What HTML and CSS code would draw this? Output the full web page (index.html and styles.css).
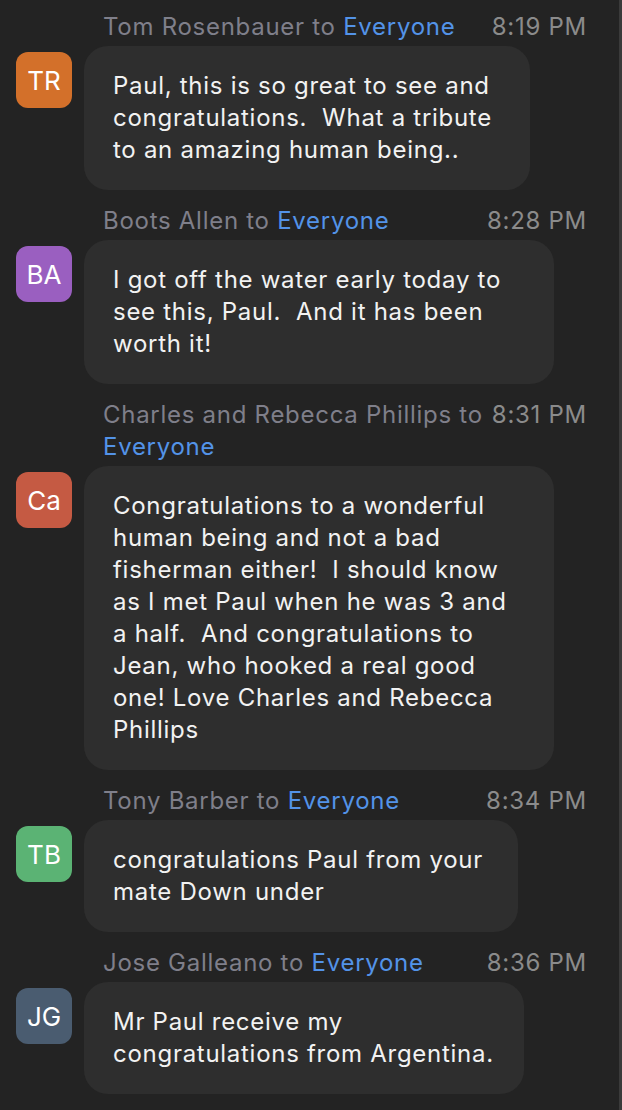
FILE: index.html
```html
<!DOCTYPE html>
<html lang="en">
<head>
<meta charset="utf-8">
<title>Chat</title>
<link rel="stylesheet" href="styles.css">
</head>
<body>
<main class="chat">
  <section class="msg">
    <div class="meta">
      <div class="who">Tom Rosenbauer to <span class="to">Everyone</span></div>
      <div class="time">8:19 PM</div>
    </div>
    <div class="row">
      <div class="avatar av-orange">TR</div>
      <div class="bubble" style="width:446px">Paul, this is so great to see and<br>congratulations.&nbsp; What a tribute<br>to an amazing human being..</div>
    </div>
  </section>

  <section class="msg">
    <div class="meta">
      <div class="who">Boots Allen to <span class="to">Everyone</span></div>
      <div class="time">8:28 PM</div>
    </div>
    <div class="row">
      <div class="avatar av-purple">BA</div>
      <div class="bubble" style="width:470px">I got off the water early today to<br>see this, Paul.&nbsp; And it has been<br>worth it!</div>
    </div>
  </section>

  <section class="msg">
    <div class="meta">
      <div class="who">Charles and Rebecca Phillips to<br><span class="to">Everyone</span></div>
      <div class="time">8:31 PM</div>
    </div>
    <div class="row">
      <div class="avatar av-red">Ca</div>
      <div class="bubble" style="width:470px">Congratulations to a wonderful<br>human being and not a bad<br>fisherman either!&nbsp; I should know<br>as I met Paul when he was 3 and<br>a half.&nbsp; And congratulations to<br>Jean, who hooked a real good<br>one! Love Charles and Rebecca<br>Phillips</div>
    </div>
  </section>

  <section class="msg">
    <div class="meta">
      <div class="who">Tony Barber to <span class="to">Everyone</span></div>
      <div class="time">8:34 PM</div>
    </div>
    <div class="row">
      <div class="avatar av-green">TB</div>
      <div class="bubble" style="width:434px">congratulations Paul from your<br>mate Down under</div>
    </div>
  </section>

  <section class="msg">
    <div class="meta">
      <div class="who">Jose Galleano to <span class="to">Everyone</span></div>
      <div class="time">8:36 PM</div>
    </div>
    <div class="row">
      <div class="avatar av-slate">JG</div>
      <div class="bubble" style="width:440px">Mr Paul receive my<br>congratulations from Argentina.</div>
    </div>
  </section>
</main>
</body>
</html>
```

FILE: styles.css
```css
html, body {
  margin: 0;
  padding: 0;
  background: #232323;
}

body {
  width: 622px;
  height: 1110px;
  overflow: hidden;
  font-family: Inter, "Noto Sans", "Liberation Sans", sans-serif;
  font-size: 24px;
  line-height: 32px;
  letter-spacing: 0.72px;
  color: #f2f2f2;
}

.chat {
  box-sizing: border-box;
  height: 1110px;
  padding: 11px 0 0 16px;
  border-right: 3px solid #3a3a3a;
  display: flex;
  flex-direction: column;
  gap: 15px;
}

.msg {
  display: flex;
  flex-direction: column;
  gap: 3px;
}

.meta {
  display: flex;
  justify-content: space-between;
  align-items: flex-start;
  padding-left: 87px;
  padding-right: 32px;
  gap: 8px;
}

.who {
  color: #7f7f8a;
}

.to {
  color: #5393e8;
}

.time {
  color: #8b8b8b;
  white-space: nowrap;
}

.row {
  display: flex;
  align-items: flex-start;
  gap: 12px;
}

.avatar {
  flex: none;
  width: 56px;
  height: 56px;
  margin-top: 6px;
  border-radius: 12px;
  display: flex;
  align-items: center;
  justify-content: center;
  color: #ffffff;
  font-size: 26px;
  letter-spacing: 0;
  padding-top: 1px;
  box-sizing: border-box;
}

.av-orange { background: #d3702a; }
.av-purple { background: #9a5fc0; }
.av-red { background: #c55a43; }
.av-green { background: #5bb374; }
.av-slate { background: #4a5c70; }

.bubble {
  box-sizing: border-box;
  background: #2e2e2e;
  border-radius: 24px;
  padding: 24px 20px 24px 29px;
  white-space: nowrap;
}
```
